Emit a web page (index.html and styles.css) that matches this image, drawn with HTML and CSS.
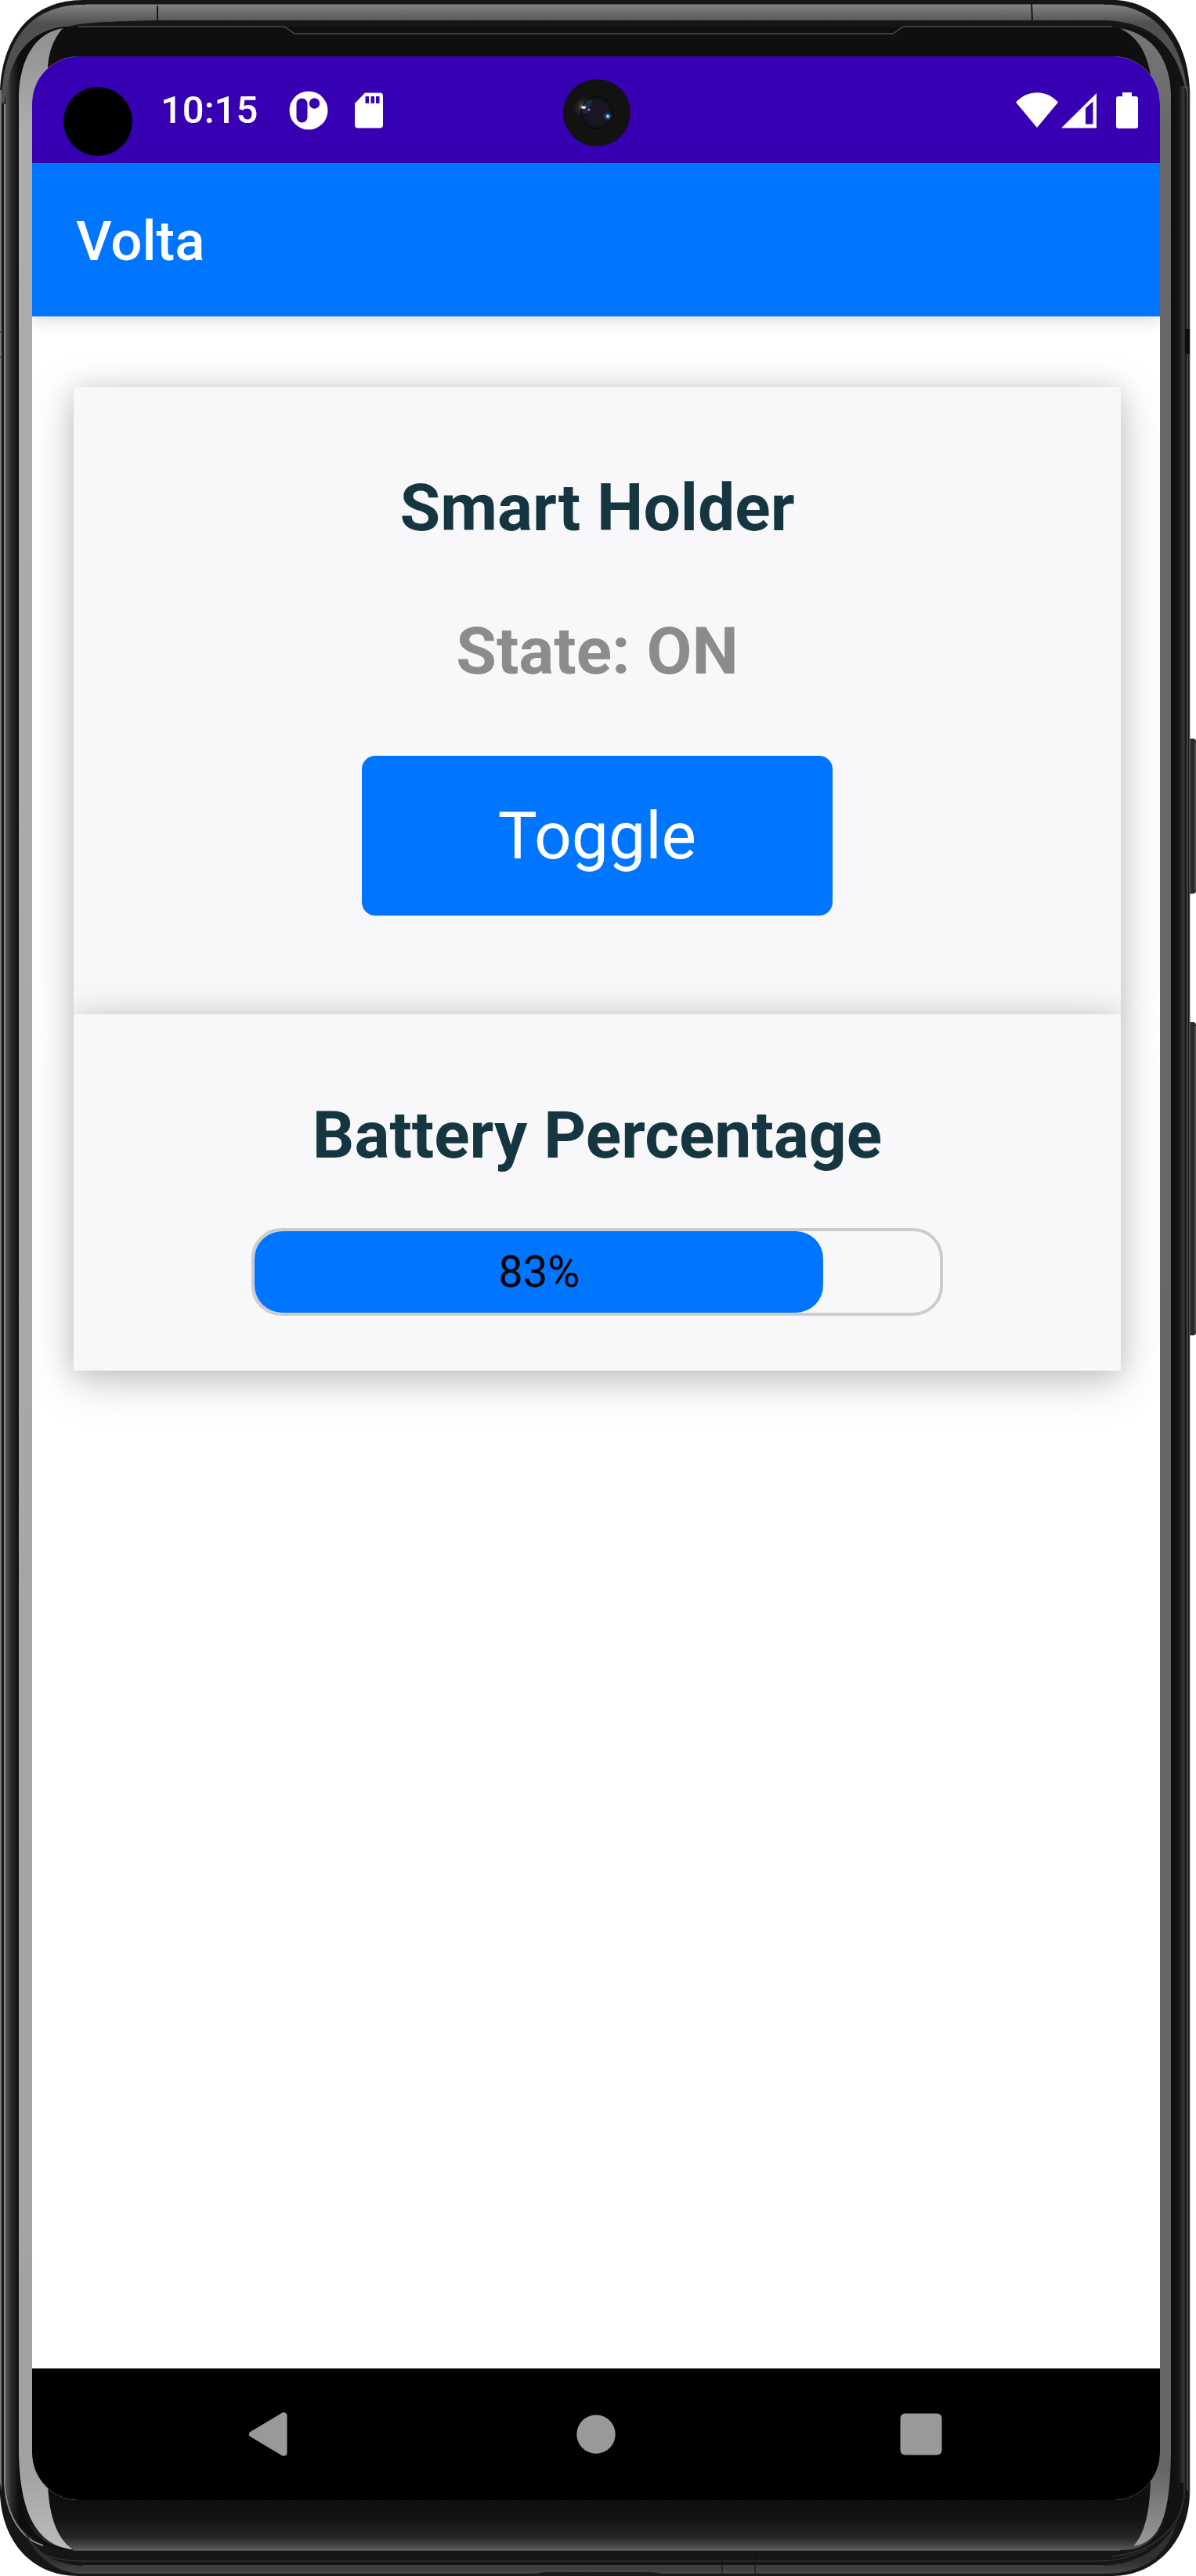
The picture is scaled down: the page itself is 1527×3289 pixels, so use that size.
FILE: index.html
```html
<!DOCTYPE html>
<html lang="en">
<head>
<meta charset="utf-8">
<meta name="viewport" content="width=device-width, initial-scale=1">
<title>Volta</title>
<link rel="stylesheet" href="styles.css">
</head>
<body>
<div class="device">
  <svg class="shell" viewBox="0 0 1527 3289" preserveAspectRatio="none" aria-hidden="true">
    <defs>
      <linearGradient id="rim" x1="0" y1="6" x2="0" y2="30" gradientUnits="userSpaceOnUse">
        <stop offset="0" stop-color="#828282"/><stop offset="1" stop-color="#505050"/>
      </linearGradient>
      <linearGradient id="left-edge" x1="6" y1="0" x2="24" y2="0" gradientUnits="userSpaceOnUse"><stop offset="0" stop-color="#5c5c5c"/><stop offset=".45" stop-color="#2a2a2a"/><stop offset="1" stop-color="#0e0e0e"/></linearGradient>
      <linearGradient id="right-edge"><stop offset="0" stop-color="#0e0e0e"/><stop offset=".6" stop-color="#151515"/><stop offset="1" stop-color="#4a4a4a"/></linearGradient>
      <linearGradient id="chin" x1="0" y1="0" x2="0" y2="1">
        <stop offset="0" stop-color="#0e0e0e"/><stop offset=".4" stop-color="#141414"/><stop offset=".75" stop-color="#262626"/><stop offset="1" stop-color="#585858"/>
      </linearGradient>
      <linearGradient id="base" x1="0" y1="3270" x2="0" y2="3286" gradientUnits="userSpaceOnUse"><stop offset="0" stop-color="#303030"/><stop offset="1" stop-color="#474747"/></linearGradient>
      <linearGradient id="glare" x1="0" y1="0" x2="0" y2="1"><stop offset="0" stop-color="#8f8f8f"/><stop offset=".04" stop-color="#adadad"/><stop offset=".97" stop-color="#a2a2a2"/><stop offset="1" stop-color="#bcbcbc"/></linearGradient>
      <linearGradient id="glare-dim" x1="0" y1="0" x2="0" y2="1"><stop offset="0" stop-color="#777"/><stop offset=".04" stop-color="#686868"/><stop offset=".97" stop-color="#666"/><stop offset="1" stop-color="#999"/></linearGradient>
    </defs>
    <!-- side keys -->
    <rect x="1514" y="943" width="13" height="198" rx="4" fill="#2b2b2b"/>
    <path d="M1526 948v188" stroke="#777" stroke-width="1"/>
    <rect x="1514" y="1305" width="13" height="400" rx="4" fill="#2b2b2b"/>
    <path d="M1526 1310v390" stroke="#777" stroke-width="1"/>
    <!-- body -->
    <path d="M0 115C3 45 42 0 106 0H1425C1482 4 1516 50 1519 115V3185C1517 3245 1475 3289 1420 3289H100C40 3289 3 3245 0 3185Z" fill="#161616"/>
    <!-- metal rim -->
    <path d="M2 130C4 50 40 9 100 6H1410C1465 4 1510 42 1517 125C1502 60 1475 28 1410 26H200C90 30 30 20 5 133Z" fill="url(#rim)"/>
    <path d="M110 6H1410" stroke="#8a8a8a" stroke-width="1"/>
    <path d="M201 7V29M1317 4L1318 26" stroke="#181818" stroke-width="2"/>
    <!-- left side -->
    <path d="M0 115H2V3180L0 3170Z" fill="#777"/>
    <path d="M7 130C10 80 30 42 80 34H90V3255H70C20 3235 7 3205 7 3160Z" fill="url(#left-edge)"/>
    <path d="M6 133V3170C8 3215 30 3243 55 3250" stroke="#8a8a8a" stroke-width="2" fill="none"/>
    <path d="M0 424H4M0 456H4" stroke="#222" stroke-width="1"/>
    <!-- right side -->
    <path d="M1430 34C1482 38 1512 72 1512 130V3170C1510 3210 1490 3248 1440 3255Z" fill="#121212"/>
    <rect x="1495" y="110" width="18" height="3060" fill="url(#right-edge)"/>
    <path d="M1512 112V3180C1512 3220 1480 3258 1420 3264" stroke="#2d2d2d" stroke-width="2" fill="none"/>
    <path d="M1516 110V3180" stroke="#777" stroke-width="1"/>
    <path d="M1519 115V3185" stroke="#777" stroke-width="1"/>
    <rect x="1513" y="420" width="6" height="32" fill="#0d0d0d"/>
    <!-- inner glass -->
    <path d="M24 120C26 70 45 38 92 34H1410C1465 36 1495 80 1495 130V3130C1493 3215 1478 3250 1430 3256H100C45 3250 25 3205 24 3130Z" fill="#0f0f0f"/>
    <path d="M24 3192H1494C1488 3232 1470 3256 1430 3256H100C55 3252 32 3232 27 3192Z" fill="url(#chin)"/>
    <path d="M100 34H363L376 43H1140L1153 34H1420" stroke="#3c3c3c" stroke-width="2" fill="none"/>
    <path d="M24 120C26 75 45 42 80 36C68 50 61 68 61 90V3170C62 3205 70 3240 93 3255C45 3250 25 3205 24 3130Z" fill="url(#glare)"/>
    <path d="M1430 36C1475 44 1494 80 1495 120V3130C1494 3205 1485 3245 1447 3251C1462 3235 1468 3205 1469 3167V95C1465 75 1458 50 1430 36Z" fill="url(#glare-dim)"/>
    <!-- bottom edge -->
    <path d="M93 3256H1430" stroke="#777" stroke-width="1"/>
    <path d="M28 3225C45 3262 75 3276 110 3276H1400C1450 3276 1485 3254 1502 3220C1490 3268 1455 3286 1410 3286H105C70 3286 40 3260 28 3225Z" fill="url(#base)"/>
    <path d="M60 3262C75 3269 90 3270 110 3270H1400C1430 3270 1450 3262 1465 3254" stroke="#3a3a3a" stroke-width="1" fill="none"/>
    <path d="M105 3276H1410" stroke="#565656" stroke-width="1"/>
    <path d="M678 3287C688 3285 692 3284 700 3284H826C836 3284 840 3285 848 3287V3289H678Z" fill="#1a1a1a"/>
    <path d="M922 3257V3286M964 3257V3286" stroke="#101010" stroke-width="1"/>
  </svg>

  <div class="screen">
    <header class="status-bar">
      <span class="cutout"></span>
      <span class="clock">10:15</span>
      <svg class="icon-app" viewBox="0 0 50 50" aria-hidden="true">
        <circle cx="25" cy="25" r="24.5" fill="#fff"/>
        <rect x="9.500" y="9.500" width="14" height="31" rx="7" fill="#3700b3"/>
        <circle cx="32.500" cy="16" r="6.700" fill="#3700b3"/>
      </svg>
      <svg class="icon-sd" viewBox="0 0 36 46" aria-hidden="true">
        <path d="M13 .5H32a4 4 0 0 1 4 4V41.500a4 4 0 0 1-4 4H4a4 4 0 0 1-4-4V14Z" fill="#fff"/>
        <path d="M13.500 5h4.500v9h-4.500zM20.500 5h4.500v9h-4.500zM27 5h4.500v9H27z" fill="#3700b3"/>
      </svg>
      <span class="spacer"></span>
      <svg class="icon-wifi" viewBox="0 0 54 46" aria-hidden="true">
        <path d="M0 12.500C15-4 39-4 54 12.500L27 45Z" fill="#fff"/>
      </svg>
      <svg class="icon-signal" viewBox="0 0 46 46" aria-hidden="true">
        <path fill-rule="evenodd" d="M0 45.500L45 1V45.500ZM31 20V40.500H40.500V11.500Z" fill="#fff"/>
      </svg>
      <svg class="icon-battery" viewBox="0 0 28 46" aria-hidden="true">
        <path d="M8 0H20V5H25a3 3 0 0 1 3 3V43a3 3 0 0 1-3 3H3a3 3 0 0 1-3-3V8a3 3 0 0 1 3-3H8Z" fill="#fff"/>
      </svg>
      <svg class="camera" viewBox="0 0 86 86" aria-hidden="true">
        <defs>
          <radialGradient id="glow"><stop offset="0" stop-color="#777b70"/><stop offset=".4" stop-color="#2b2d2a"/><stop offset="1" stop-color="#111" stop-opacity="0"/></radialGradient>
          <radialGradient id="lens"><stop offset="0" stop-color="#1e1422"/><stop offset=".7" stop-color="#181522"/><stop offset="1" stop-color="#0a1018"/></radialGradient>
          <radialGradient id="spark"><stop offset="0" stop-color="#c8f0ff"/><stop offset=".3" stop-color="#2e78b0"/><stop offset="1" stop-color="#123a60" stop-opacity="0"/></radialGradient>
        </defs>
        <circle cx="43" cy="43" r="43" fill="#111211"/>
        <circle cx="26" cy="36" r="16" fill="url(#glow)"/>
        <circle cx="43" cy="43" r="20.500" fill="url(#lens)" stroke="#07090b"/>
        <path d="M25 35C28 29 31 26 36 25L37 30L30 43L24 44Z" fill="#20436a" opacity=".5"/>
        <circle cx="57" cy="47.500" r="6" fill="url(#spark)"/>
        <circle cx="57" cy="47.500" r="1.300" fill="#d8f4ff"/>
        <ellipse cx="26" cy="36" rx="3" ry="2" fill="#d5d8c8"/>
        <circle cx="33" cy="39" r="1.500" fill="#b480b0"/>
      </svg>
    </header>

    <div class="app-bar"><h1 class="app-title">Volta</h1></div>

    <main class="content">
      <section class="card card-holder">
        <h2 class="card-title">Smart Holder</h2>
        <p class="card-state">State: ON</p>
        <button class="toggle" type="button">Toggle</button>
      </section>
      <section class="card card-battery">
        <h2 class="card-title" id="battery-label">Battery Percentage</h2>
        <div class="meter" role="progressbar" aria-labelledby="battery-label" aria-valuemin="0" aria-valuemax="100" aria-valuenow="83">
          <div class="meter-fill" style="width: 83%">83%</div>
        </div>
      </section>
    </main>

    <nav class="nav-bar" aria-label="System">
      <button class="nav-button" type="button" aria-label="Back">
        <svg class="nav-icon" viewBox="0 0 56 56" aria-hidden="true"><path d="M1.500 25L42 .8C45 -.5 48.500 1 48.500 4V52C48.500 55 45 56.500 42 55.200L1.500 31C-1 29.500 -1 26.500 1.500 25Z" fill="#999"/></svg>
      </button>
      <button class="nav-button" type="button" aria-label="Home">
        <svg class="nav-icon" viewBox="0 0 56 56" aria-hidden="true"><circle cx="28" cy="28" r="24.700" fill="#999"/></svg>
      </button>
      <button class="nav-button" type="button" aria-label="Recent apps">
        <svg class="nav-icon" viewBox="0 0 56 56" aria-hidden="true"><rect x="1.500" y="1.500" width="53" height="53" rx="6" fill="#999"/></svg>
      </button>
    </nav>
  </div>
</div>
</body>
</html>
```

FILE: styles.css
```css
* {
  box-sizing: border-box;
}

body {
  margin: 0;
  background: #fff;
  font-family: Roboto, "Liberation Sans", sans-serif;
}

h1,
h2,
p {
  margin: 0;
}

button {
  margin: 0;
  padding: 0;
  border: 0;
  font-family: inherit;
  cursor: pointer;
}

/* Phone body */
.device {
  position: relative;
  display: flex;
  min-height: 100vh;
  padding: 72px 46px 97px 41px;
}

.shell {
  position: absolute;
  inset: 0;
  width: 100%;
  height: 100%;
}

.screen {
  position: relative;
  display: flex;
  flex: 1;
  flex-direction: column;
  overflow: hidden;
  border-radius: 60px;
  background: #fff;
}

/* Status bar */
.status-bar {
  position: relative;
  display: flex;
  align-items: center;
  height: 136px;
  padding: 2px 28px 0 40px;
  background: #3700b3;
  color: #fff;
}

.cutout {
  width: 88px;
  height: 88px;
  margin-top: 28px;
  border-radius: 50%;
  background: #000;
}

.clock {
  margin-left: 36px;
  font-size: 49px;
  font-weight: 500;
  line-height: 56px;
}

.icon-app {
  width: 50px;
  height: 50px;
  margin-left: 40px;
}

.icon-sd {
  width: 36px;
  height: 46px;
  margin-left: 34px;
}

.spacer {
  flex: 1;
}

.icon-wifi {
  width: 54px;
  height: 46px;
}

.icon-signal {
  width: 46px;
  height: 46px;
  margin-left: 4px;
}

.icon-battery {
  width: 28px;
  height: 46px;
  margin-left: 24px;
}

.camera {
  position: absolute;
  top: 29px;
  left: calc(50% - 42px);
  width: 86px;
  height: 86px;
}

/* App bar */
.app-bar {
  position: relative;
  display: flex;
  align-items: center;
  height: 196px;
  padding: 4px 56px 0;
  background: #0075ff;
  box-shadow: 0 4px 20px rgba(0, 0, 0, 0.16);
  color: #fff;
}

.app-title {
  font-size: 71px;
  font-weight: 500;
  line-height: 84px;
}

/* Cards */
.content {
  flex: 1;
  padding: 90px 50px 90px 53px;
}

.card {
  position: relative;
  display: flex;
  flex-direction: column;
  align-items: center;
  background: #f8f8fb;
  box-shadow: 0 14px 56px rgba(0, 0, 0, 0.18), 0 4px 32px rgba(0, 0, 0, 0.14);
  font-size: 84px;
  line-height: 100px;
}

.card-holder {
  gap: 83px;
  padding: 105px 0 126px;
}

.card-battery {
  gap: 68px;
  padding: 105px 0 70px;
}

.card-title {
  color: #153641;
  font-size: 84px;
  font-weight: 700;
}

.card-state {
  color: #8c8c8c;
  font-weight: 700;
}

.toggle {
  width: 45%;
  height: 204px;
  border-radius: 17px;
  background: #0075ff;
  color: #fff;
  font-size: 84px;
}

.meter {
  width: 66%;
  height: 112px;
  border: 4px solid #ccc;
  border-radius: 38px;
}

.meter-fill {
  height: 100%;
  border-radius: 35px;
  background: #0075ff;
  color: #000;
  font-size: 56px;
  line-height: 104px;
  text-align: center;
}

/* Navigation bar */
.nav-bar {
  display: flex;
  align-items: center;
  justify-content: space-between;
  height: 168px;
  padding: 0 277px;
  background: #000;
}

.nav-button {
  background: none;
}

.nav-icon {
  display: block;
  width: 56px;
  height: 56px;
}
```
